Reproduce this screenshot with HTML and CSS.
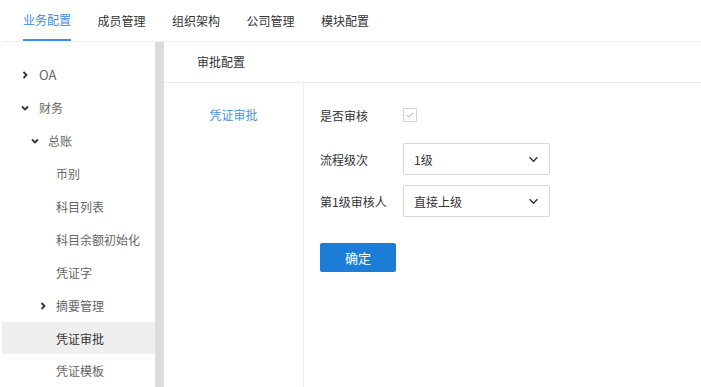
FILE: index.html
```html
<!DOCTYPE html>
<html lang="zh-CN">
<head>
    <meta charset="UTF-8">
    <title>审批配置</title>
    <link rel="stylesheet" href="styles.css">
</head>
<body>
    <div class="page">
        <div class="tabs">
            <div class="tab active">业务配置</div>
            <div class="tab">成员管理</div>
            <div class="tab">组织架构</div>
            <div class="tab">公司管理</div>
            <div class="tab">模块配置</div>
        </div>
        <div class="main">
            <div class="sidebar">
                <div class="item lv1"><svg class="arrow" viewBox="0 0 8 8"><path d="M2.5 1 L5.5 4 L2.5 7"/></svg>OA</div>
                <div class="item lv1"><svg class="arrow" viewBox="0 0 8 8"><path d="M1 2.5 L4 5.5 L7 2.5"/></svg>财务</div>
                <div class="item lv2"><svg class="arrow" viewBox="0 0 8 8"><path d="M1 2.5 L4 5.5 L7 2.5"/></svg>总账</div>
                <div class="item lv3">币别</div>
                <div class="item lv3">科目列表</div>
                <div class="item lv3">科目余额初始化</div>
                <div class="item lv3">凭证字</div>
                <div class="item lv3 folder"><svg class="arrow" viewBox="0 0 8 8"><path d="M2.5 1 L5.5 4 L2.5 7"/></svg>摘要管理</div>
                <div class="item lv3 current">凭证审批</div>
                <div class="item lv3">凭证模板</div>
            </div>
            <div class="gutter"></div>
            <div class="content">
                <div class="content-head">审批配置</div>
                <div class="content-body">
                    <div class="side-title">凭证审批</div>
                    <div class="form">
                        <div class="row">
                            <span class="label">是否审核</span>
                            <span class="check"><svg viewBox="0 0 13 13"><path d="M3.5 6.5 L5.5 8.5 L9.5 4.5"/></svg></span>
                        </div>
                        <div class="row">
                            <span class="label">流程级次</span>
                            <div class="select">1级<svg class="caret" viewBox="0 0 12 8"><path d="M1.5 1.5 L6 6 L10.5 1.5"/></svg></div>
                        </div>
                        <div class="row">
                            <span class="label">第1级审核人</span>
                            <div class="select">直接上级<svg class="caret" viewBox="0 0 12 8"><path d="M1.5 1.5 L6 6 L10.5 1.5"/></svg></div>
                        </div>
                        <button class="btn">确定</button>
                    </div>
                </div>
            </div>
        </div>
    </div>
</body>
</html>
```

FILE: styles.css
```css
html, body {
    margin: 0;
    height: 100%;
    background: #fff;
    overflow: hidden;
}
body {
    font-family: "Noto Sans CJK SC", "Noto Sans", sans-serif;
    font-size: 12px;
    color: #333;
}
.page {
    padding-left: 2px;
    height: 100%;
    display: flex;
    flex-direction: column;
}
.tabs {
    display: flex;
    height: 41px;
    padding-left: 21px;
    border-bottom: 1px solid #f1f1f1;
}
.tab {
    width: 48px;
    margin-right: 26.5px;
    line-height: 41px;
    color: #333;
    box-sizing: border-box;
}
.tab.active {
    color: #3d8ee6;
    border-bottom: 2px solid #3d8ee6;
    line-height: 40px;
}
.main {
    flex: 1;
    display: flex;
    min-height: 0;
}
.sidebar {
    width: 153px;
    padding-top: 16px;
}
.item {
    height: 33px;
    line-height: 33px;
    color: #666;
    display: flex;
    align-items: center;
    position: relative;
}
.item.lv1 { padding-left: 37px; }
.item.lv2 { padding-left: 46px; }
.item.lv3 { padding-left: 54px; }
.item.current {
    background: #efefef;
    color: #333;
    height: 32px;
}
.item.lv1:first-child { font-size: 13px; }
.arrow {
    position: absolute;
    width: 8px;
    height: 8px;
    fill: none;
    stroke: #333;
    stroke-width: 1.8;
}
.lv1 .arrow { left: 19px; }
.lv2 .arrow { left: 29px; }
.folder .arrow { left: 37px; }
.gutter {
    width: 9px;
    background: #dcdcdc;
}
.content {
    flex: 1;
    display: flex;
    flex-direction: column;
}
.content-head {
    height: 40px;
    line-height: 40px;
    padding-left: 33px;
    border-bottom: 1px solid #ededed;
}
.content-body {
    flex: 1;
    display: flex;
}
.side-title {
    width: 139px;
    border-right: 1px solid #ededed;
    text-align: center;
    color: #4a90e2;
    padding-top: 16px;
    line-height: 32px;
}
.form {
    padding: 16px 0 0 16px;
}
.row {
    display: flex;
    align-items: center;
    height: 32px;
    margin-bottom: 10px;
}
.row:first-child {
    margin-bottom: 12px;
}
.label {
    width: 83px;
}
.check {
    width: 12px;
    height: 12px;
    border: 1px solid #d4d4d4;
    display: flex;
}
.check svg {
    width: 12px;
    height: 12px;
    fill: none;
    stroke: #9a9a9a;
    stroke-width: 1;
}
.select {
    width: 147px;
    height: 32px;
    box-sizing: border-box;
    border: 1px solid #d9d9d9;
    border-radius: 2px;
    padding: 0 10px;
    display: flex;
    align-items: center;
    justify-content: space-between;
}
.caret {
    width: 11px;
    height: 7px;
    fill: none;
    stroke: #333;
    stroke-width: 1.6;
}
.btn {
    margin-top: 16px;
    width: 76px;
    height: 29px;
    border: none;
    border-radius: 2px;
    background: #1c7dd6;
    color: #fff;
    font-family: inherit;
    font-size: 13px;
    cursor: pointer;
}
```
